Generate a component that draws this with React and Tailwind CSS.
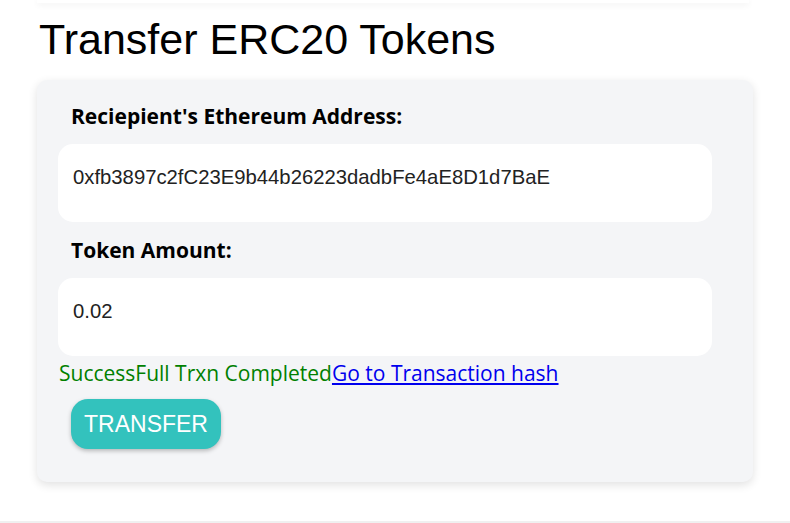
import React from 'react'

export default function App() {
  return (
    <div className="w-[790px] h-[523px] bg-white overflow-hidden relative font-['Liberation_Sans',Arial,sans-serif]">
      <div className="ml-[37px] w-[712px] h-[4px] -mt-[1px] bg-white shadow-[0_2px_6px_rgba(0,0,0,0.06)]" />
      <div className="px-[37px]">
        <h1 className="ml-[2px] mt-[10px] text-[43px] leading-[52px] text-black">Transfer ERC20 Tokens</h1>
        <div className="mt-[15px] w-[716px] h-[402px] bg-[#f4f5f7] rounded-[10px] shadow-[0_3px_10px_rgba(0,0,0,0.12)] pt-[22px] pl-[21px] pr-[41px]">
          <label className="block ml-[13px] font-['Open_Sans','Noto_Sans',sans-serif] font-bold text-[21px] leading-[28px] text-black">
            Reciepient's Ethereum Address:
          </label>
          <div className="mt-[14px] h-[78px] bg-white rounded-[15px] flex items-center pl-[15px] pb-[12px] text-[20.3px] text-[#222]">
            0xfb3897c2fC23E9b44b26223dadbFe4aE8D1d7BaE
          </div>
          <label className="block mt-[14px] ml-[13px] font-['Open_Sans','Noto_Sans',sans-serif] font-bold text-[21px] leading-[28px] text-black">
            Token Amount:
          </label>
          <div className="mt-[14px] h-[78px] bg-white rounded-[15px] flex items-center pl-[15px] pb-[12px] text-[20.3px] text-[#222]">
            0.02
          </div>
          <div className="mt-[3px] ml-[1px] font-['Open_Sans','Noto_Sans',sans-serif] text-[21px] leading-[28px] whitespace-nowrap">
            <span className="text-[#008000]">SuccessFull Trxn Completed</span>
            <a href="#" className="text-[#0000ee] underline">Go to Transaction hash</a>
          </div>
          <button className="mt-[12px] ml-[13px] w-[150px] h-[50px] rounded-[17px] bg-[#33c2bd] text-white text-[23px] shadow-[0_2px_4px_rgba(0,0,0,0.25)]">
            TRANSFER
          </button>
        </div>
      </div>
      <div className="absolute left-0 right-0 bottom-0 h-[2px] bg-[#f0f0f0]" />
    </div>
  )
}
